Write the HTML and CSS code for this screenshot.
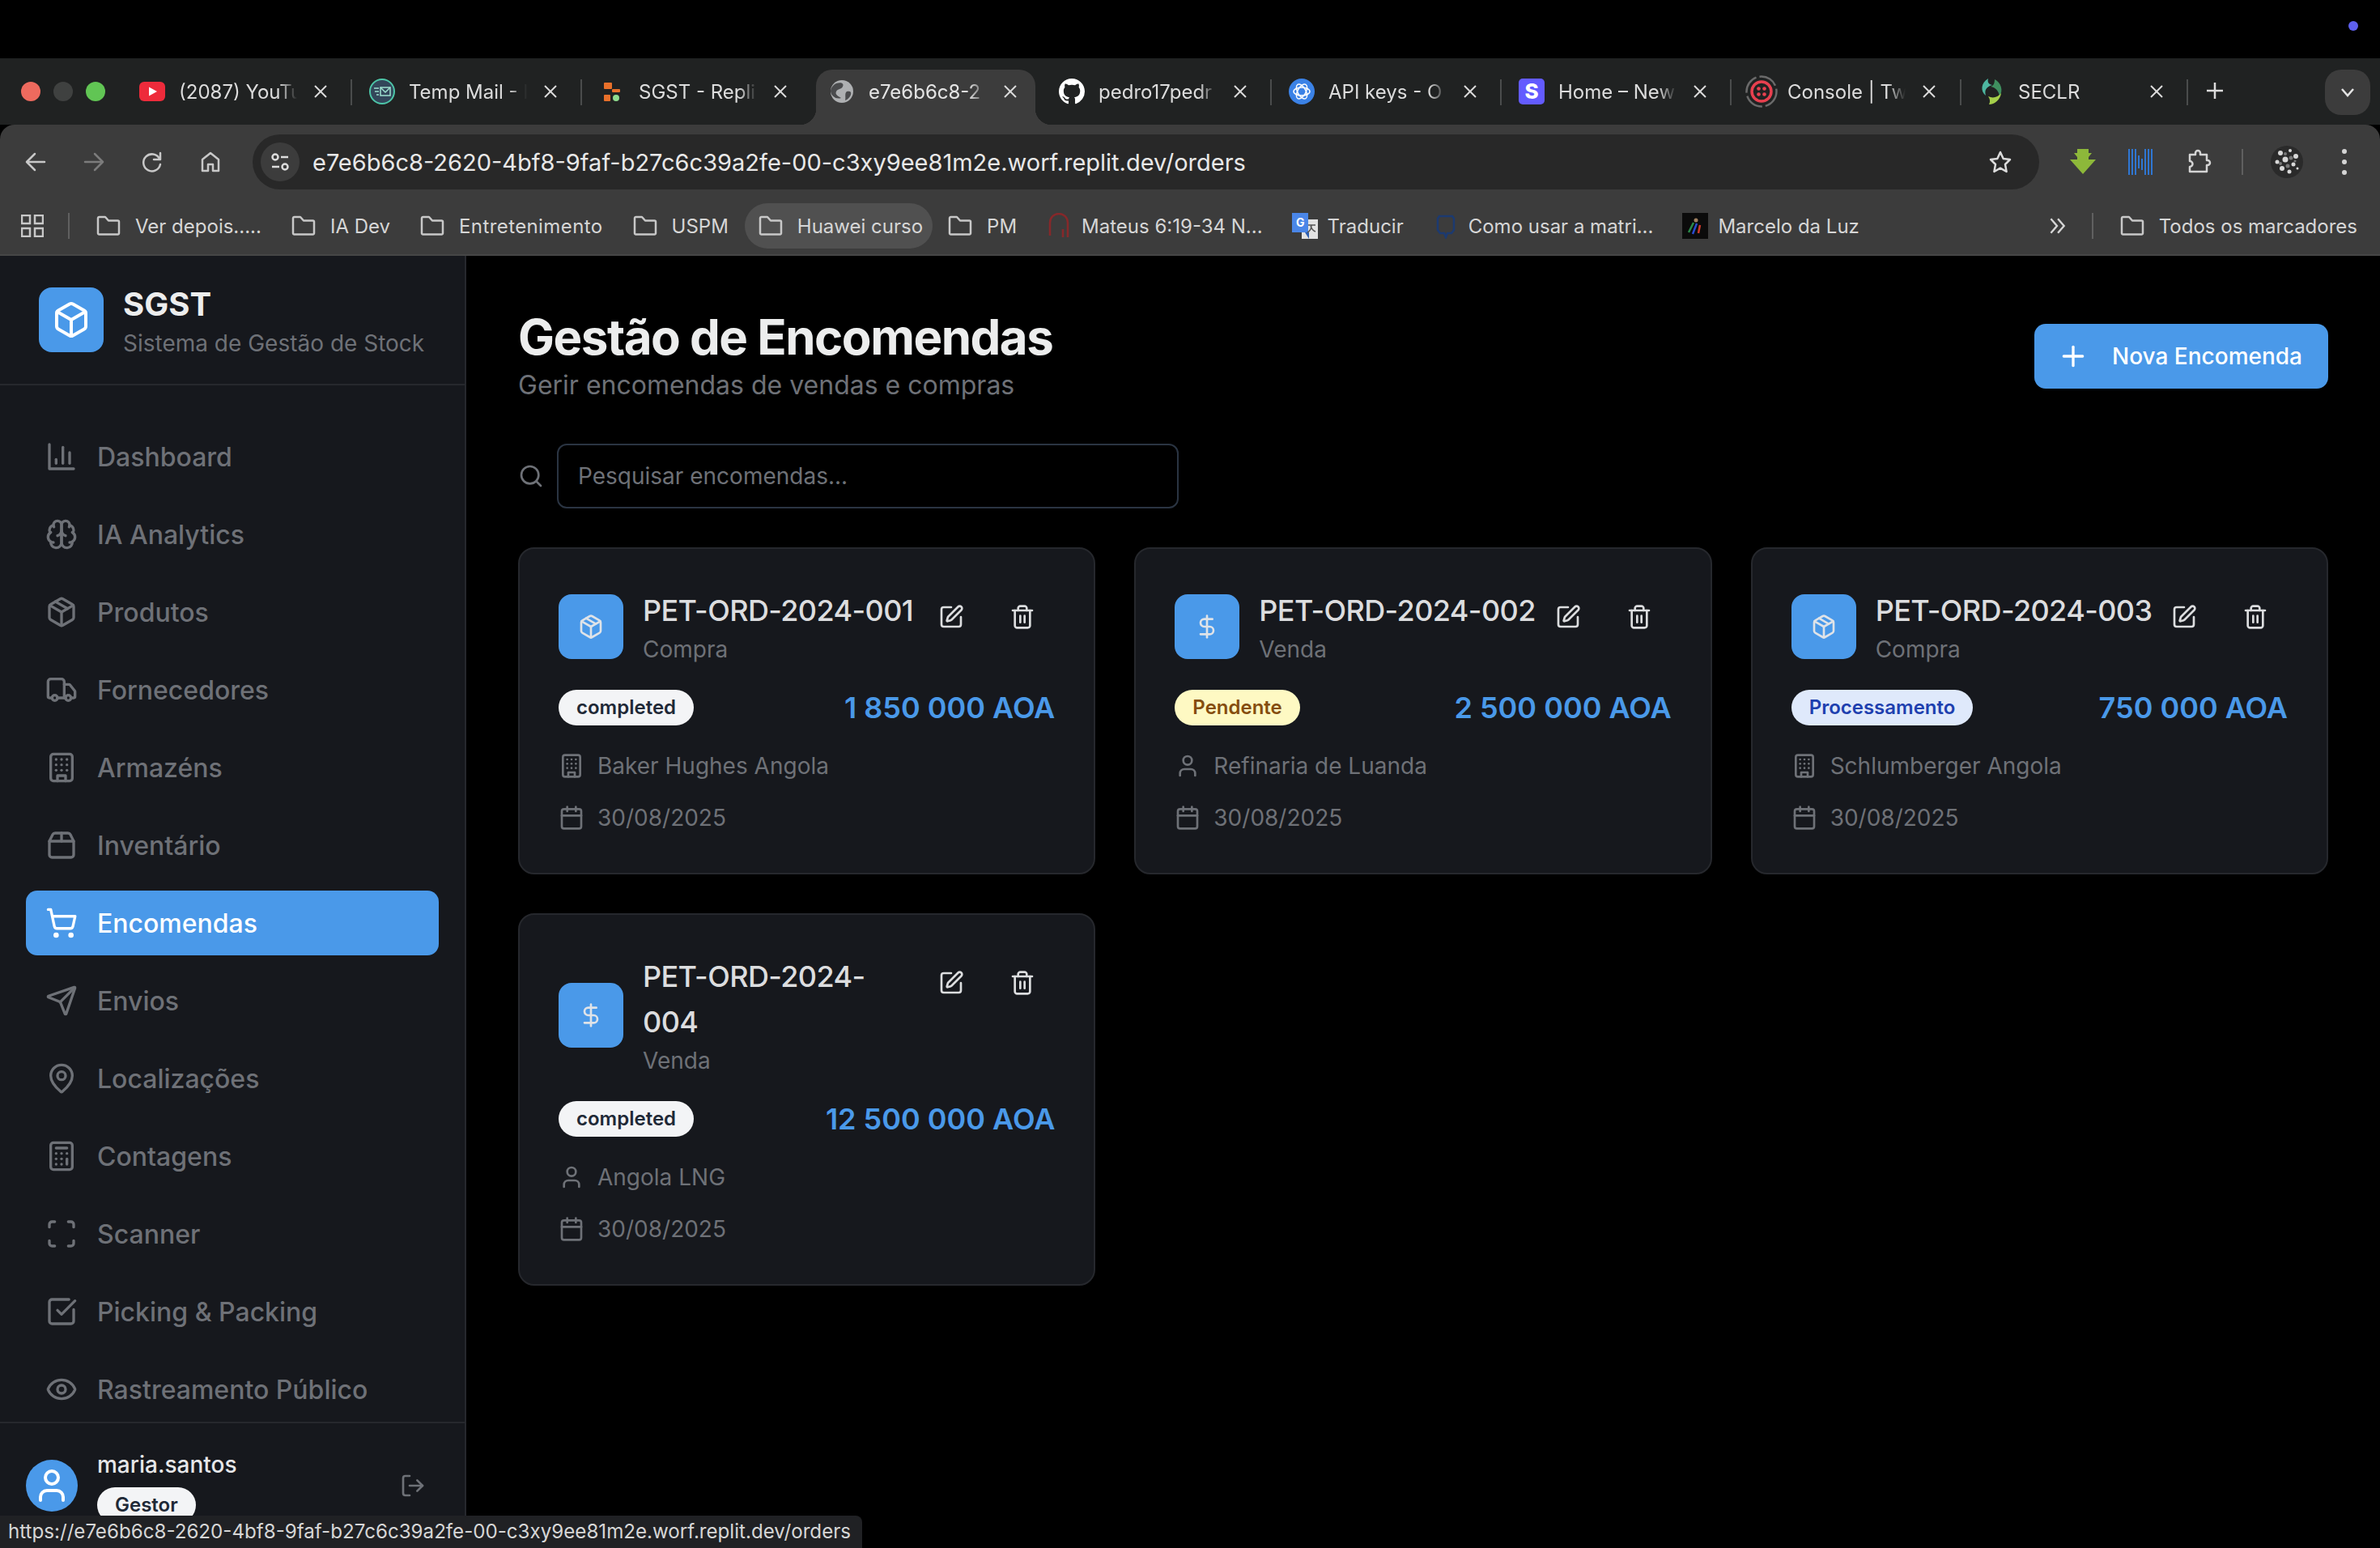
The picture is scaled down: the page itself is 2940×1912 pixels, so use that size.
FILE: index.html
```html
<!doctype html>
<html>
	<head>
		<meta charset="utf-8">
		<title>SGST</title>
		<link rel="stylesheet" href="styles.css">
	</head>
	<body>
		<svg class="sprite">
			<symbol id="i-chart" viewBox="0 0 24 24"><path d="M3 3v18h18"/><path d="M18 17V9"/><path d="M13 17V5"/><path d="M8 17v-3"/></symbol>
			<symbol id="i-brain" viewBox="0 0 24 24"><path d="M12 5a3 3 0 1 0-5.997.125 4 4 0 0 0-2.526 5.77 4 4 0 0 0 .556 6.588A4 4 0 1 0 12 18Z"/><path d="M12 5a3 3 0 1 1 5.997.125 4 4 0 0 1 2.526 5.77 4 4 0 0 1-.556 6.588A4 4 0 1 1 12 18Z"/><path d="M15 13a4.5 4.5 0 0 1-3-4 4.5 4.5 0 0 1-3 4"/><path d="M17.599 6.5a3 3 0 0 0 .399-1.375"/><path d="M6.003 5.125A3 3 0 0 0 6.401 6.5"/><path d="M3.477 10.896a4 4 0 0 1 .585-.396"/><path d="M19.938 10.5a4 4 0 0 1 .585.396"/><path d="M6 18a4 4 0 0 1-1.967-.516"/><path d="M19.967 17.484A4 4 0 0 1 18 18"/></symbol>
			<symbol id="i-package" viewBox="0 0 24 24"><path d="m7.5 4.27 9 5.15"/><path d="M21 8a2 2 0 0 0-1-1.73l-7-4a2 2 0 0 0-2 0l-7 4A2 2 0 0 0 3 8v8a2 2 0 0 0 1 1.73l7 4a2 2 0 0 0 2 0l7-4A2 2 0 0 0 21 16Z"/><path d="m3.3 7 8.7 5 8.7-5"/><path d="M12 22V12"/></symbol>
			<symbol id="i-box" viewBox="0 0 24 24"><path d="M21 8a2 2 0 0 0-1-1.73l-7-4a2 2 0 0 0-2 0l-7 4A2 2 0 0 0 3 8v8a2 2 0 0 0 1 1.73l7 4a2 2 0 0 0 2 0l7-4A2 2 0 0 0 21 16Z"/><path d="m3.3 7 8.7 5 8.7-5"/><path d="M12 22V12"/></symbol>
			<symbol id="i-truck" viewBox="0 0 24 24"><path d="M14 18V6a2 2 0 0 0-2-2H4a2 2 0 0 0-2 2v11a1 1 0 0 0 1 1h2"/><path d="M15 18H9"/><path d="M19 18h2a1 1 0 0 0 1-1v-3.65a1 1 0 0 0-.22-.624l-3.48-4.35A1 1 0 0 0 17.52 8H14"/><circle cx="17" cy="18" r="2"/><circle cx="7" cy="18" r="2"/></symbol>
			<symbol id="i-building" viewBox="0 0 24 24"><rect width="16" height="20" x="4" y="2" rx="2"/><path d="M9 22v-4h6v4"/><path d="M8 6h.01"/><path d="M16 6h.01"/><path d="M12 6h.01"/><path d="M12 10h.01"/><path d="M12 14h.01"/><path d="M16 10h.01"/><path d="M16 14h.01"/><path d="M8 10h.01"/><path d="M8 14h.01"/></symbol>
			<symbol id="i-package2" viewBox="0 0 24 24"><path d="M3 9h18v10a2 2 0 0 1-2 2H5a2 2 0 0 1-2-2V9Z"/><path d="m3 9 2.45-4.9A2 2 0 0 1 7.24 3h9.52a2 2 0 0 1 1.8 1.1L21 9"/><path d="M12 3v6"/></symbol>
			<symbol id="i-cart" viewBox="0 0 24 24"><circle cx="8" cy="21" r="1"/><circle cx="19" cy="21" r="1"/><path d="M2.05 2.05h2l2.66 12.42a2 2 0 0 0 2 1.58h9.78a2 2 0 0 0 1.95-1.57l1.65-7.43H5.12"/></symbol>
			<symbol id="i-send" viewBox="0 0 24 24"><path d="M14.536 21.686a.5.5 0 0 0 .937-.024l6.5-19a.496.496 0 0 0-.635-.635l-19 6.5a.5.5 0 0 0-.024.937l7.93 3.18a2 2 0 0 1 1.112 1.11z"/><path d="m21.854 2.147-10.94 10.939"/></symbol>
			<symbol id="i-pin" viewBox="0 0 24 24"><path d="M20 10c0 4.993-5.539 10.193-7.399 11.799a1 1 0 0 1-1.202 0C9.539 20.193 4 14.993 4 10a8 8 0 0 1 16 0"/><circle cx="12" cy="10" r="3"/></symbol>
			<symbol id="i-calc" viewBox="0 0 24 24"><rect width="16" height="20" x="4" y="2" rx="2"/><path d="M8 6h8"/><path d="M16 14v4"/><path d="M16 10h.01"/><path d="M12 10h.01"/><path d="M8 10h.01"/><path d="M12 14h.01"/><path d="M8 14h.01"/><path d="M12 18h.01"/><path d="M8 18h.01"/></symbol>
			<symbol id="i-scan" viewBox="0 0 24 24"><path d="M3 7V5a2 2 0 0 1 2-2h2"/><path d="M17 3h2a2 2 0 0 1 2 2v2"/><path d="M21 17v2a2 2 0 0 1-2 2h-2"/><path d="M7 21H5a2 2 0 0 1-2-2v-2"/></symbol>
			<symbol id="i-check" viewBox="0 0 24 24"><path d="M21 10.5V19a2 2 0 0 1-2 2H5a2 2 0 0 1-2-2V5a2 2 0 0 1 2-2h12.5"/><path d="m9 11 3 3L22 4"/></symbol>
			<symbol id="i-eye" viewBox="0 0 24 24"><path d="M2.062 12.348a1 1 0 0 1 0-.696 10.75 10.75 0 0 1 19.876 0 1 1 0 0 1 0 .696 10.75 10.75 0 0 1-19.876 0"/><circle cx="12" cy="12" r="3"/></symbol>
			<symbol id="i-user" viewBox="0 0 24 24"><path d="M19 21v-2a4 4 0 0 0-4-4H9a4 4 0 0 0-4 4v2"/><circle cx="12" cy="7" r="4"/></symbol>
			<symbol id="i-logout" viewBox="0 0 24 24"><path d="M9 21H5a2 2 0 0 1-2-2V5a2 2 0 0 1 2-2h4"/><path d="m16 17 5-5-5-5"/><path d="M21 12H9"/></symbol>
			<symbol id="i-plus" viewBox="0 0 24 24"><path d="M5 12h14"/><path d="M12 5v14"/></symbol>
			<symbol id="i-search" viewBox="0 0 24 24"><circle cx="11" cy="11" r="8"/><path d="m21 21-4.3-4.3"/></symbol>
			<symbol id="i-edit" viewBox="0 0 24 24"><path d="M12 3H5a2 2 0 0 0-2 2v14a2 2 0 0 0 2 2h14a2 2 0 0 0 2-2v-7"/><path d="M18.375 2.625a1 1 0 0 1 3 3l-9.013 9.014a2 2 0 0 1-.853.505l-2.873.84a.5.5 0 0 1-.62-.62l.84-2.873a2 2 0 0 1 .506-.852z"/></symbol>
			<symbol id="i-trash" viewBox="0 0 24 24"><path d="M3 6h18"/><path d="M19 6v14c0 1-1 2-2 2H7c-1 0-2-1-2-2V6"/><path d="M8 6V4c0-1 1-2 2-2h4c1 0 2 1 2 2v2"/><path d="M10 11v6"/><path d="M14 11v6"/></symbol>
			<symbol id="i-dollar" viewBox="0 0 24 24"><path d="M12 2v20"/><path d="M17 5H9.5a3.5 3.5 0 0 0 0 7h5a3.5 3.5 0 0 1 0 7H6"/></symbol>
			<symbol id="i-calendar" viewBox="0 0 24 24"><path d="M8 2v4"/><path d="M16 2v4"/><rect width="18" height="18" x="3" y="4" rx="2"/><path d="M3 10h18"/></symbol>
			<symbol id="i-close" viewBox="0 0 18 18"><path d="M2 2l14 14"/><path d="M16 2 2 16"/></symbol>
			<symbol id="i-folder" viewBox="0 0 32 32"><path d="M3 6.5a1.5 1.5 0 0 1 1.5-1.500h7.500l4 4.500h11.500a1.500 1.500 0 0 1 1.500 1.500v14a1.500 1.500 0 0 1-1.500 1.500h-23a1.500 1.500 0 0 1-1.500-1.500z"/></symbol>
		</svg>

		<div class="osBar"><span class="osDot"></span></div>

		<div class="tabStrip">
			<div class="lights">
				<span class="light red"></span>
				<span class="light off"></span>
				<span class="light green"></span>
			</div>
			<div class="tab">
				<svg class="fav" viewBox="0 0 32 32"><rect y="4" width="32" height="24" rx="6" fill="#ee2b3b"/><path d="M12 10.500 22 16l-10 5.500z" fill="#fff"/></svg>
				<span class="tabTitle">(2087) YouTu</span>
				<svg class="tabClose"><use href="#i-close"/></svg>
			</div>
			<div class="tab">
				<svg class="fav" viewBox="0 0 32 32"><circle cx="16" cy="16" r="15" fill="#33465a" stroke="#4dc5a8" stroke-width="2"/><path d="M6 12h6M7 16h5M9 20h3" stroke="#9ee0cf" stroke-width="1.500"/><rect x="14" y="11" width="12" height="10" fill="none" stroke="#9ee0cf" stroke-width="1.500"/><path d="m14 11 6 6 6-6" fill="none" stroke="#9ee0cf" stroke-width="1.500"/></svg>
				<span class="tabTitle">Temp Mail - I</span>
				<svg class="tabClose"><use href="#i-close"/></svg>
			</div>
			<div class="tab noSep">
				<svg class="fav" viewBox="0 0 32 32"><rect x="6" y="5" width="10" height="8" rx="1" fill="#e8702a"/><rect x="16" y="13" width="10" height="4" rx="1" fill="#e8702a"/><rect x="6" y="20" width="8" height="8" rx="1" fill="#e8702a"/><circle cx="21" cy="24" r="4" fill="#8fdc8f"/></svg>
				<span class="tabTitle">SGST - Repli</span>
				<svg class="tabClose"><use href="#i-close"/></svg>
			</div>
			<div class="tab active noSep">
				<svg class="fav" viewBox="0 0 32 32"><circle cx="16" cy="16" r="14" fill="#aeb0b2"/><path d="M9 6c6-2 10 0 8 4s-6 2-8 6 3 6 6 8c-6 2-12-2-13-8 0-4 3-8 7-10zM22 16c4-1 6 0 5 4-1 3-4 6-7 7 1-4-1-9 2-11z" fill="#4a4b4d"/></svg>
				<span class="tabTitle">e7e6b6c8-2</span>
				<svg class="tabClose"><use href="#i-close"/></svg>
			</div>
			<div class="tab">
				<svg class="fav" viewBox="0 0 16 16"><path fill="#fff" d="M8 0C3.580 0 0 3.580 0 8c0 3.540 2.290 6.530 5.470 7.590.4.070.55-.17.55-.38 0-.19-.01-.82-.01-1.490-2.010.37-2.530-.49-2.690-.94-.09-.23-.48-.94-.82-1.130-.28-.15-.68-.52-.01-.53.630-.01 1.080.58 1.230.82.720 1.210 1.870.87 2.330.66.070-.52.280-.87.510-1.070-1.780-.2-3.640-.89-3.640-3.950 0-.87.310-1.590.82-2.150-.08-.2-.36-1.020.08-2.120 0 0 .67-.21 2.200.82.640-.18 1.320-.27 2-.27s1.360.09 2 .27c1.530-1.040 2.200-.82 2.200-.82.440 1.100.160 1.920.08 2.120.51.560.82 1.270.82 2.150 0 3.070-1.870 3.750-3.650 3.950.29.250.54.730.54 1.480 0 1.070-.01 1.930-.01 2.200 0 .21.150.46.55.38A8.010 8.010 0 0 0 16 8c0-4.420-3.580-8-8-8z"/></svg>
				<span class="tabTitle">pedro17pedr</span>
				<svg class="tabClose"><use href="#i-close"/></svg>
			</div>
			<div class="tab">
				<svg class="fav" viewBox="0 0 32 32"><circle cx="16" cy="16" r="16" fill="#3b82e6"/><g fill="none" stroke="#fff" stroke-width="1.500"><ellipse cx="16" cy="16" rx="10" ry="5"/><ellipse cx="16" cy="16" rx="10" ry="5" transform="rotate(60 16 16)"/><ellipse cx="16" cy="16" rx="10" ry="5" transform="rotate(120 16 16)"/></g></svg>
				<span class="tabTitle">API keys - O</span>
				<svg class="tabClose"><use href="#i-close"/></svg>
			</div>
			<div class="tab">
				<span class="favStripe">S</span>
				<span class="tabTitle">Home – New</span>
				<svg class="tabClose"><use href="#i-close"/></svg>
			</div>
			<div class="tab">
				<svg class="fav wide" viewBox="0 0 40 40"><circle cx="20" cy="20" r="18.500" fill="none" stroke="#6a6a6a" stroke-width="2.500" stroke-dasharray="24 4"/><circle cx="20" cy="20" r="12" fill="none" stroke="#e8404f" stroke-width="3.500"/><g fill="#e8404f"><circle cx="16.500" cy="16.500" r="2.300"/><circle cx="23.500" cy="16.500" r="2.300"/><circle cx="16.500" cy="23.500" r="2.300"/><circle cx="23.500" cy="23.500" r="2.300"/></g></svg>
				<span class="tabTitle">Console | Tw</span>
				<svg class="tabClose"><use href="#i-close"/></svg>
			</div>
			<div class="tab lastTab">
				<svg class="fav" viewBox="0 0 32 32"><path d="M12 0C3 5 2 16 9 21 7 14 10 10 17 8 12 7 11 4 12 0z" fill="#4db6a0"/><path d="M20 1c8 4 11 14 6 21-1-7-5-11-11-12 4-1 5-5 5-9z" fill="#3f8f5f"/><path d="M28 18c-1 8-8 14-15 14 2-4 1-7-1-10 6 3 12 1 16-4z" fill="#a4cf4a"/></svg>
				<span class="tabTitle">SECLR</span>
				<svg class="tabClose"><use href="#i-close"/></svg>
			</div>
			<svg class="newTab" viewBox="0 0 24 24"><path d="M12 2v20"/><path d="M2 12h20"/></svg>
			<div class="tabSearch"><svg viewBox="0 0 20 20"><path d="m3 6 7 8 7-8"/></svg></div>
		</div>

		<div class="toolbar">
			<svg class="navIco" viewBox="0 0 32 32"><path d="M27 16H6"/><path d="M15 6 5 16l10 10"/></svg>
			<svg class="navIco dim" viewBox="0 0 32 32"><path d="M5 16h21"/><path d="m17 6 10 10-10 10"/></svg>
			<svg class="navIco" viewBox="0 0 32 32"><path d="M25 12a10.500 10.500 0 1 0 1 7"/><path d="M26 5v8h-8"/></svg>
			<svg class="navIco" viewBox="0 0 32 32"><path d="M16 5 6 13v14h7v-8h6v8h7V13z"/></svg>
			<div class="urlBar">
				<span class="siteBtn"><svg viewBox="0 0 28 28"><circle cx="8" cy="8" r="3.500"/><path d="M15 8h9"/><circle cx="20" cy="20" r="3.500"/><path d="M4 20h9"/></svg></span>
				<span class="url">e7e6b6c8-2620-4bf8-9faf-b27c6c39a2fe-00-c3xy9ee81m2e.worf.replit.dev/orders</span>
				<svg class="star" viewBox="0 0 32 32"><path d="m16 4 3.700 8 8.300 1-6 6 1.600 9-7.600-4.300L8.400 28 10 19l-6-6 8.300-1z"/></svg>
			</div>
			<div class="extensions">
				<svg class="extIco" viewBox="0 0 32 32"><path d="M9 0h14v5h4l-4 5v3h9L16 31 0 13h9v-3L5 5h4z" fill="#8db83a"/></svg>
				<svg class="extIco" viewBox="0 0 32 32"><g fill="#2f76d2"><rect x="0" y="0" width="2" height="32"/><rect x="4" y="0" width="2" height="32"/><rect x="8" y="0" width="2" height="32"/><rect x="12" y="8" width="2" height="16"/><rect x="16" y="12" width="2" height="14"/><rect x="20" y="0" width="2" height="32"/><rect x="24" y="0" width="2" height="32"/><rect x="28" y="0" width="2" height="32"/></g></svg>
				<svg class="extIco line" viewBox="0 0 32 32"><path d="M4 7h7V5a3 3 0 0 1 6 0v2h8v7h1a3 3 0 0 1 0 6h-1v8H4v-6a3.500 3.500 0 0 0 0-7z"/></svg>
				<span class="toolSep"></span>
				<svg class="profile" viewBox="0 0 40 40"><circle cx="20" cy="20" r="20" fill="#2a2a2a"/><g fill="#d8d8d8"><circle cx="12" cy="9" r="3"/><circle cx="24" cy="6" r="2"/><circle cx="31" cy="13" r="3"/><circle cx="8" cy="20" r="2.500"/><circle cx="18" cy="17" r="3.500"/><circle cx="28" cy="23" r="2.500"/><circle cx="14" cy="28" r="3"/><circle cx="23" cy="32" r="2.500"/><circle cx="33" cy="28" r="1.500"/></g><g fill="#777"><circle cx="18" cy="10" r="2"/><circle cx="25" cy="15" r="2.500"/><circle cx="12" cy="22" r="2"/><circle cx="21" cy="25" r="2.500"/><circle cx="30" cy="19" r="1.500"/></g></svg>
				<span class="kebab"><i></i><i></i><i></i></span>
			</div>
		</div>

		<div class="bookmarks">
			<svg class="gridIco" viewBox="0 0 28 28"><rect x="1" y="1" width="10" height="10"/><rect x="17" y="1" width="10" height="10"/><rect x="1" y="17" width="10" height="10"/><rect x="17" y="17" width="10" height="10"/></svg>
			<span class="bmSep"></span>
			<a class="bm"><svg class="folder"><use href="#i-folder"/></svg>Ver depois.....</a>
			<a class="bm"><svg class="folder"><use href="#i-folder"/></svg>IA Dev</a>
			<a class="bm spaced"><svg class="folder"><use href="#i-folder"/></svg>Entretenimento</a>
			<a class="bm"><svg class="folder"><use href="#i-folder"/></svg>USPM</a>
			<a class="bm open"><svg class="folder"><use href="#i-folder"/></svg>Huawei curso</a>
			<a class="bm"><svg class="folder"><use href="#i-folder"/></svg>PM</a>
			<a class="bm site"><svg class="bmIco" viewBox="0 0 32 32"><path d="M5 28V12a11 11 0 0 1 22 0v18M21 20v10" fill="none" stroke="#86282a" stroke-width="2.500"/></svg>Mateus 6:19-34 N...</a>
			<a class="bm site"><svg class="bmIco" viewBox="0 0 32 32"><rect x="12" y="8" width="20" height="24" fill="#e2e2e2"/><rect x="0" y="0" width="20" height="24" fill="#4a86e8"/><path d="m16 24 5 8v-8z" fill="#2f5fb0"/><path d="M20 15h9M24 15c0 5-3 8-5 9M23 16c1 3 3 6 6 7" fill="none" stroke="#555" stroke-width="1.500"/><text class="gLetter" x="5" y="17">G</text></svg>Traducir</a>
			<a class="bm site"><svg class="bmIco" viewBox="0 0 32 32"><path d="M8 4h16l2 3v14l-3 4h-5l-2 5-2-5H9l-3-4V7z" fill="none" stroke="#1c3a70" stroke-width="2.500"/></svg>Como usar a matri...</a>
			<a class="bm site"><svg class="bmIco" viewBox="0 0 32 32"><rect width="32" height="32" fill="#0b0b0b"/><path d="M8 24 14 12" stroke="#2a8a4a" stroke-width="2.500"/><path d="M13 26l5-13" stroke="#2a4ad0" stroke-width="2.500"/><path d="M20 25l2-10" stroke="#d03a2a" stroke-width="2.500"/><circle cx="17" cy="9" r="2.500" fill="#a08060"/></svg>Marcelo da Luz</a>
			<span class="bmSpacer"></span>
			<svg class="bmMore" viewBox="0 0 24 24"><path d="m5 4 7 8-7 8"/><path d="m13 4 7 8-7 8"/></svg>
			<span class="bmSep"></span>
			<a class="bm last"><svg class="folder"><use href="#i-folder"/></svg>Todos os marcadores</a>
		</div>

		<div class="app">
			<aside class="sidebar">
				<div class="brand">
					<div class="brandLogo"><svg class="ico ico48"><use href="#i-box"/></svg></div>
					<div>
						<div class="brandName">SGST</div>
						<div class="brandSub">Sistema de Gestão de Stock</div>
					</div>
				</div>
				<nav class="sideNav">
					<a class="navItem"><svg class="ico ico40"><use href="#i-chart"/></svg>Dashboard</a>
					<a class="navItem"><svg class="ico ico40"><use href="#i-brain"/></svg>IA Analytics</a>
					<a class="navItem"><svg class="ico ico40"><use href="#i-package"/></svg>Produtos</a>
					<a class="navItem"><svg class="ico ico40"><use href="#i-truck"/></svg>Fornecedores</a>
					<a class="navItem"><svg class="ico ico40"><use href="#i-building"/></svg>Armazéns</a>
					<a class="navItem"><svg class="ico ico40"><use href="#i-package2"/></svg>Inventário</a>
					<a class="navItem selected"><svg class="ico ico40"><use href="#i-cart"/></svg>Encomendas</a>
					<a class="navItem"><svg class="ico ico40"><use href="#i-send"/></svg>Envios</a>
					<a class="navItem"><svg class="ico ico40"><use href="#i-pin"/></svg>Localizações</a>
					<a class="navItem"><svg class="ico ico40"><use href="#i-calc"/></svg>Contagens</a>
					<a class="navItem"><svg class="ico ico40"><use href="#i-scan"/></svg>Scanner</a>
					<a class="navItem"><svg class="ico ico40"><use href="#i-check"/></svg>Picking &amp; Packing</a>
					<a class="navItem"><svg class="ico ico40"><use href="#i-eye"/></svg>Rastreamento Público</a>
				</nav>
				<div class="userBox">
					<div class="avatar"><svg class="ico ico48"><use href="#i-user"/></svg></div>
					<div class="userInfo">
						<div class="userName">maria.santos</div>
						<span class="badge gray">Gestor</span>
					</div>
					<svg class="ico ico32 logout"><use href="#i-logout"/></svg>
				</div>
			</aside>

			<main class="content">
				<div class="pageHead">
					<div>
						<h1 class="pageTitle">Gestão de Encomendas</h1>
						<p class="pageSub">Gerir encomendas de vendas e compras</p>
					</div>
					<button class="newBtn"><svg class="ico ico40"><use href="#i-plus"/></svg>Nova Encomenda</button>
				</div>

				<div class="searchRow">
					<svg class="ico ico32"><use href="#i-search"/></svg>
					<input class="searchInput" placeholder="Pesquisar encomendas...">
				</div>

				<div class="cards">
					<div class="card">
						<div class="cardTop">
							<div class="cardIcon"><svg class="ico ico32"><use href="#i-package"/></svg></div>
							<div class="cardHead">
								<div class="cardTitle">PET-ORD-2024-001</div>
								<div class="cardType">Compra</div>
							</div>
							<div class="cardActions">
								<span class="actBtn"><svg class="ico ico32"><use href="#i-edit"/></svg></span>
								<span class="actBtn"><svg class="ico ico32"><use href="#i-trash"/></svg></span>
							</div>
						</div>
						<div class="cardMid">
							<span class="badge gray">completed</span>
							<span class="amount">1 850 000 AOA</span>
						</div>
						<div class="cardLine"><svg class="ico ico32"><use href="#i-building"/></svg>Baker Hughes Angola</div>
						<div class="cardLine"><svg class="ico ico32"><use href="#i-calendar"/></svg>30/08/2025</div>
					</div>

					<div class="card">
						<div class="cardTop">
							<div class="cardIcon"><svg class="ico ico32"><use href="#i-dollar"/></svg></div>
							<div class="cardHead">
								<div class="cardTitle">PET-ORD-2024-002</div>
								<div class="cardType">Venda</div>
							</div>
							<div class="cardActions">
								<span class="actBtn"><svg class="ico ico32"><use href="#i-edit"/></svg></span>
								<span class="actBtn"><svg class="ico ico32"><use href="#i-trash"/></svg></span>
							</div>
						</div>
						<div class="cardMid">
							<span class="badge yellow">Pendente</span>
							<span class="amount">2 500 000 AOA</span>
						</div>
						<div class="cardLine"><svg class="ico ico32"><use href="#i-user"/></svg>Refinaria de Luanda</div>
						<div class="cardLine"><svg class="ico ico32"><use href="#i-calendar"/></svg>30/08/2025</div>
					</div>

					<div class="card">
						<div class="cardTop">
							<div class="cardIcon"><svg class="ico ico32"><use href="#i-package"/></svg></div>
							<div class="cardHead">
								<div class="cardTitle">PET-ORD-2024-003</div>
								<div class="cardType">Compra</div>
							</div>
							<div class="cardActions">
								<span class="actBtn"><svg class="ico ico32"><use href="#i-edit"/></svg></span>
								<span class="actBtn"><svg class="ico ico32"><use href="#i-trash"/></svg></span>
							</div>
						</div>
						<div class="cardMid">
							<span class="badge blue">Processamento</span>
							<span class="amount">750 000 AOA</span>
						</div>
						<div class="cardLine"><svg class="ico ico32"><use href="#i-building"/></svg>Schlumberger Angola</div>
						<div class="cardLine"><svg class="ico ico32"><use href="#i-calendar"/></svg>30/08/2025</div>
					</div>

					<div class="card">
						<div class="cardTop">
							<div class="cardIcon"><svg class="ico ico32"><use href="#i-dollar"/></svg></div>
							<div class="cardHead">
								<div class="cardTitle">PET-ORD-2024-<br>004</div>
								<div class="cardType">Venda</div>
							</div>
							<div class="cardActions">
								<span class="actBtn"><svg class="ico ico32"><use href="#i-edit"/></svg></span>
								<span class="actBtn"><svg class="ico ico32"><use href="#i-trash"/></svg></span>
							</div>
						</div>
						<div class="cardMid">
							<span class="badge gray">completed</span>
							<span class="amount">12 500 000 AOA</span>
						</div>
						<div class="cardLine"><svg class="ico ico32"><use href="#i-user"/></svg>Angola LNG</div>
						<div class="cardLine"><svg class="ico ico32"><use href="#i-calendar"/></svg>30/08/2025</div>
					</div>
				</div>
			</main>
		</div>

		<div class="statusBubble">https://e7e6b6c8-2620-4bf8-9faf-b27c6c39a2fe-00-c3xy9ee81m2e.worf.replit.dev/orders</div>
	</body>
</html>
```

FILE: styles.css
```css
*{
	margin: 0;
	padding: 0;
	box-sizing: border-box;
}
body{
	width: 2940px;
	height: 1912px;
	overflow: hidden;
	display: flex;
	flex-direction: column;
	background: #000;
	font-family: Inter, "Noto Sans", sans-serif;
	color: #e6e7e9;
}
.sprite{
	display: none;
}

/**
 * browser frame
 */
.osBar{
	height: 72px;
	background: #000;
	display: flex;
	justify-content: flex-end;
	padding: 26px 27px 0 0;
}
.osDot{
	width: 12px;
	height: 12px;
	border-radius: 50%;
	background: #5e60ee;
}
.tabStrip{
	height: 82px;
	background: #202222;
	display: flex;
	align-items: flex-start;
	font-size: 24px;
	color: #dcdcdc;
}
.lights{
	width: 150px;
	height: 82px;
	display: flex;
	gap: 16px;
	padding: 29px 0 0 26px;
}
.light{
	width: 24px;
	height: 24px;
	border-radius: 50%;
}
.light.red{ background: #ed6a5e; }
.light.off{ background: #3f4140; }
.light.green{ background: #61c554; }

.tab{
	position: relative;
	width: 284px;
	height: 82px;
	padding: 0 26px 0 22px;
	display: flex;
	align-items: center;
	flex: none;
}
.tab.lastTab{
	width: 280px;
}
.tab.lastTab .tabTitle{
	width: 142px;
}
.tab::after{
	content: "";
	position: absolute;
	right: -1px;
	top: 26px;
	width: 2px;
	height: 32px;
	background: #4a4c4c;
}
.tab.noSep::after{
	display: none;
}
.tab.active{
	color: #e4e4e4;
}
.tab.active::before{
	content: "";
	position: absolute;
	left: 6px;
	right: 7px;
	top: 14px;
	bottom: 0;
	background: #3c3c3c;
	border-radius: 20px 20px 0 0;
}
/* the two curves where the active tab meets the toolbar */
.tab.active::after{
	display: block;
	left: -14px;
	right: -13px;
	top: auto;
	bottom: 0;
	width: auto;
	height: 20px;
	background:
		radial-gradient(circle at 0 0, transparent 20px, #3c3c3c 20.5px) left bottom / 20px 20px no-repeat,
		radial-gradient(circle at 100% 0, transparent 20px, #3c3c3c 20.5px) right bottom / 20px 20px no-repeat;
}
.tab > *{
	position: relative;
}
.fav{
	width: 32px;
	height: 32px;
	flex: none;
	margin-right: 17px;
}
.fav.wide{
	width: 40px;
	height: 40px;
	margin: 0 12px 0 -4px;
}
.favStripe{
	width: 32px;
	height: 32px;
	flex: none;
	margin-right: 17px;
	border-radius: 5px;
	background: #635bff;
	color: #fff;
	font-weight: 800;
	font-size: 26px;
	line-height: 32px;
	text-align: center;
}
.tabTitle{
	width: 146px;
	flex: none;
	white-space: nowrap;
	overflow: hidden;
	-webkit-mask-image: linear-gradient(to right, #000 85%, transparent 100%);
	mask-image: linear-gradient(to right, #000 85%, transparent 100%);
}
.tabClose{
	width: 18px;
	height: 18px;
	margin-left: 20px;
	fill: none;
	stroke: #dcdcdc;
	stroke-width: 2;
	flex: none;
}
.newTab{
	width: 24px;
	height: 24px;
	margin: 28px 0 0 22px;
	fill: none;
	stroke: #dcdcdc;
	stroke-width: 2.5;
	flex: none;
}
.tabSearch{
	width: 56px;
	height: 56px;
	margin: 14px 12px 0 auto;
	background: #3c3c3c;
	border-radius: 20px;
	display: flex;
	align-items: center;
	justify-content: center;
}
.tabSearch svg{
	width: 20px;
	height: 20px;
	fill: none;
	stroke: #e4e4e4;
	stroke-width: 2.5;
}

.toolbar{
	height: 90px;
	background: #3c3c3c;
	border-radius: 18px 18px 0 0;
	display: flex;
	align-items: flex-start;
	padding: 12px 0 0 28px;
}
.navIco{
	width: 32px;
	height: 32px;
	margin: 18px 40px 0 0;
	fill: none;
	stroke: #c8c8c8;
	stroke-width: 2.5;
	stroke-linecap: round;
	stroke-linejoin: round;
	flex: none;
}
.navIco.dim{
	stroke: #7c7c7c;
}
.urlBar{
	width: 2207px;
	height: 68px;
	margin-left: -4px;
	background: #282828;
	border-radius: 34px;
	display: flex;
	align-items: center;
	padding: 0 32px 0 10px;
	flex: none;
}
.siteBtn{
	width: 48px;
	height: 48px;
	border-radius: 50%;
	background: #3c3c3c;
	display: flex;
	align-items: center;
	justify-content: center;
	flex: none;
}
.siteBtn svg{
	width: 28px;
	height: 28px;
	fill: none;
	stroke: #dcdcdc;
	stroke-width: 2.5;
}
.url{
	margin-left: 16px;
	font-size: 29px;
	color: #e8e8e8;
	white-space: nowrap;
}
.star{
	width: 32px;
	height: 32px;
	margin-left: auto;
	fill: none;
	stroke: #dcdcdc;
	stroke-width: 2.5;
	stroke-linejoin: round;
}
.extensions{
	display: flex;
	align-items: center;
	height: 68px;
	padding-left: 38px;
}
.extIco{
	width: 32px;
	height: 32px;
	margin-right: 40px;
	flex: none;
}
.extIco.line{
	fill: none;
	stroke: #d4d4d4;
	stroke-width: 2.5;
	stroke-linejoin: round;
	margin-right: 36px;
}
.toolSep{
	width: 2px;
	height: 32px;
	background: #5f5f5f;
	margin-right: 34px;
}
.profile{
	width: 40px;
	height: 40px;
	margin-right: 48px;
	flex: none;
}
.kebab{
	display: flex;
	flex-direction: column;
	gap: 7px;
}
.kebab i{
	width: 6px;
	height: 6px;
	border-radius: 50%;
	background: #d4d4d4;
}

.bookmarks{
	height: 72px;
	background: #3c3c3c;
	border-bottom: 2px solid #464646;
	display: flex;
	align-items: center;
	padding: 0 16px 0 26px;
	font-size: 24px;
	color: #d6d6d6;
}
.gridIco{
	width: 28px;
	height: 28px;
	fill: none;
	stroke: #c8c8c8;
	stroke-width: 2.5;
	flex: none;
}
.bmSep{
	width: 2px;
	height: 32px;
	background: #606060;
	margin: 0 16px 0 30px;
	flex: none;
}
.bm{
	display: flex;
	align-items: center;
	gap: 17px;
	height: 56px;
	padding: 0 12px 0 16px;
	margin-right: 8px;
	border-radius: 28px;
	white-space: nowrap;
	flex: none;
}
.bm.spaced{
	letter-spacing: 0.4px;
}
.bm.site{
	gap: 12px;
}
.bm.last{
	margin-right: 0;
}
.bm.open{
	background: #505050;
	margin-right: 2px;
}
.folder{
	width: 32px;
	height: 32px;
	fill: none;
	stroke: #c8c8c8;
	stroke-width: 2.5;
	stroke-linejoin: round;
	flex: none;
}
.bmIco{
	width: 32px;
	height: 32px;
	flex: none;
}
.gLetter{
	fill: #fff;
	font-size: 14px;
	font-weight: 700;
}
.bmSpacer{
	flex: 1;
}
.bmMore{
	width: 26px;
	height: 26px;
	fill: none;
	stroke: #d6d6d6;
	stroke-width: 2.2;
	flex: none;
}
.bmMore + .bmSep{
	margin: 0 16px 0 30px;
}

/**
 * app layout
 */
.app{
	flex: 1;
	display: flex;
	min-height: 0;
}
.ico{
	fill: none;
	stroke: currentColor;
	stroke-width: 2;
	stroke-linecap: round;
	stroke-linejoin: round;
	flex: none;
}
.ico32{ width: 32px; height: 32px; }
.ico40{ width: 40px; height: 40px; }
.ico48{ width: 48px; height: 48px; }

.sidebar{
	width: 576px;
	flex: none;
	background: #16181d;
	border-right: 2px solid #26282d;
	overflow: hidden;
}
.brand{
	height: 160px;
	padding: 32px 48px 0;
	display: flex;
	gap: 24px;
	border-bottom: 2px solid #26282d;
}
.brandLogo{
	width: 80px;
	height: 80px;
	margin-top: 7px;
	border-radius: 16px;
	background: #4a99e9;
	color: #fff;
	display: flex;
	align-items: center;
	justify-content: center;
}
.brandName{
	font-size: 40px;
	font-weight: 700;
	line-height: 56px;
	color: #eceded;
}
.brandSub{
	font-size: 28px;
	line-height: 40px;
	color: #6e7177;
}
.sideNav{
	height: 1280px;
	padding: 48px 32px 0;
	display: flex;
	flex-direction: column;
	gap: 16px;
}
.navItem{
	height: 80px;
	padding: 0 24px;
	display: flex;
	align-items: center;
	gap: 24px;
	border-radius: 14px;
	font-size: 32px;
	font-weight: 500;
	color: #6e7177;
}
.navItem.selected{
	background: #4a99e9;
	color: #fff;
}
.userBox{
	border-top: 2px solid #26282d;
	padding: 31px 32px 0;
	display: flex;
	align-items: center;
	gap: 24px;
}
.avatar{
	width: 64px;
	height: 64px;
	border-radius: 50%;
	background: #4a99e9;
	color: #fff;
	display: flex;
	align-items: center;
	justify-content: center;
	flex: none;
}
.userInfo{
	flex: 1;
}
.userName{
	font-size: 28px;
	font-weight: 500;
	line-height: 40px;
	margin-bottom: 8px;
}
.logout{
	color: #6e7177;
	margin-right: 16px;
}
.badge{
	display: inline-block;
	height: 44px;
	padding: 0 22px;
	border-radius: 22px;
	font-size: 24px;
	font-weight: 600;
	line-height: 44px;
	white-space: nowrap;
}
.badge.gray{ background: #f3f4f6; color: #1f2937; }
.badge.yellow{ background: #fef9c3; color: #854d0e; }
.badge.blue{ background: #dfe9fb; color: #1e40af; }

/**
 * main content
 */
.content{
	flex: 1;
	padding: 64px;
	background: #000;
	min-width: 0;
}
.pageHead{
	display: flex;
	justify-content: space-between;
	align-items: center;
	height: 120px;
	margin-bottom: 48px;
}
.pageTitle{
	font-size: 60px;
	font-weight: 700;
	line-height: 72px;
	color: #eceded;
	letter-spacing: -1.5px;
}
.pageSub{
	font-size: 32px;
	line-height: 48px;
	color: #6e7177;
}
.newBtn{
	width: 363px;
	height: 80px;
	padding: 0 0 0 28px;
	border: none;
	border-radius: 14px;
	background: #4a99e9;
	color: #fff;
	font-family: inherit;
	font-size: 28px;
	font-weight: 500;
	display: flex;
	align-items: center;
	gap: 28px;
}
.searchRow{
	width: 816px;
	height: 80px;
	margin-bottom: 48px;
	display: flex;
	align-items: center;
	gap: 16px;
	color: #6e7177;
}
.searchInput{
	flex: 1;
	min-width: 0;
	height: 80px;
	padding: 0 24px;
	background: #000;
	border: 2px solid #2a3442;
	border-radius: 12px;
	font-family: inherit;
	font-size: 28px;
	color: #e6e7e9;
}
.searchInput::placeholder{
	color: #6e7177;
}
.cards{
	display: grid;
	grid-template-columns: repeat(3, minmax(0, 1fr));
	gap: 48px;
	align-items: start;
}
.card{
	background: #16181d;
	border: 2px solid #26282d;
	border-radius: 20px;
	padding: 48px;
}
.cardTop{
	display: flex;
	align-items: center;
	gap: 24px;
}
.cardIcon{
	width: 80px;
	height: 80px;
	border-radius: 16px;
	background: #4a99e9;
	color: #dfe3e8;
	display: flex;
	align-items: center;
	justify-content: center;
	flex: none;
}
.cardHead{
	flex: 1;
	min-width: 0;
}
.cardTitle{
	font-size: 36px;
	font-weight: 500;
	line-height: 56px;
	letter-spacing: -0.6px;
	color: #dcdddf;
	white-space: nowrap;
}
.cardType{
	font-size: 28px;
	line-height: 40px;
	color: #6e7177;
}
.cardActions{
	display: flex;
	gap: 8px;
	align-self: flex-start;
	margin-left: -24px;
}
.actBtn{
	width: 80px;
	height: 72px;
	display: flex;
	align-items: center;
	justify-content: center;
	color: #dcdddf;
}
.cardMid{
	height: 56px;
	margin-top: 24px;
	margin-bottom: 24px;
	display: flex;
	justify-content: space-between;
	align-items: center;
}
.amount{
	font-size: 36px;
	font-weight: 600;
	line-height: 56px;
	color: #4a99e9;
}
.cardLine{
	height: 40px;
	margin-bottom: 24px;
	display: flex;
	align-items: center;
	gap: 16px;
	font-size: 28px;
	color: #6e7177;
}
.cardLine:last-child{
	margin-bottom: 0;
}

/* link preview bubble, lies over the page */
.statusBubble{
	position: absolute;
	left: 0;
	bottom: 0;
	width: 1065px;
	height: 40px;
	padding-left: 10px;
	background: #202124;
	border-radius: 0 8px 0 0;
	font-size: 24.15px;
	line-height: 40px;
	color: #d6d6d6;
	white-space: nowrap;
}
```
